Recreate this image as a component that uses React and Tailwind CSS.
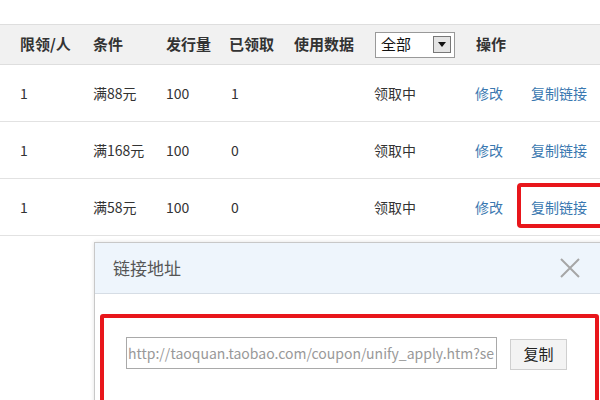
const rows = [
  { limit: "1", cond: "满88元", total: "100", got: "1" },
  { limit: "1", cond: "满168元", total: "100", got: "0" },
  { limit: "1", cond: "满58元", total: "100", got: "0" },
];

export default function App() {
  return (
    <div
      className="relative w-[600px] h-[400px] overflow-hidden bg-white text-[#333]"
      style={{ fontFamily: '"Noto Sans CJK SC", "Liberation Sans", sans-serif' }}
    >
      <div className="h-6" />
      {/* header */}
      <div className="flex items-center h-[41px] bg-[#f1f1f1] border-y border-[#dedede] pl-5 text-[15px] font-bold text-[#333]">
        <div className="w-[73px]">限领/人</div>
        <div className="w-[73px]">条件</div>
        <div className="w-[63px]">发行量</div>
        <div className="w-[65px]">已领取</div>
        <div className="w-[81px]">使用数据</div>
        <div className="w-[101px]">
          <div className="flex items-center justify-between w-[80px] h-[26px] border border-[#999] bg-white pl-[5px] pr-[3px] font-normal text-[15px] text-[#111]">
            <span>全部</span>
            <span className="flex items-center justify-center w-[18px] h-[17px] border border-[#777] bg-[#e4e4e4]">
              <svg width="8" height="5" viewBox="0 0 8 5">
                <path d="M0 0 L8 0 L4 5 Z" fill="#111" />
              </svg>
            </span>
          </div>
        </div>
        <div>操作</div>
      </div>
      {/* rows */}
      {rows.map((r, i) => (
        <div
          key={i}
          className="flex items-center h-[57px] border-b border-[#e2e2e2] pl-5 text-[14px] text-[#333]"
        >
          <div className="w-[73px]">{r.limit}</div>
          <div className="w-[73px]">{r.cond}</div>
          <div className="w-[63px]">{r.total}</div>
          <div className="w-[145px] pl-[2px]">{r.got}</div>
          <div className="w-[101px]">领取中</div>
          <div className="w-[56px] text-[#3a78b0]">修改</div>
          <div className="relative text-[#3a78b0]">
            复制链接
            {i === 2 && (
              <div className="absolute -left-[14px] -top-[14px] w-[90px] h-[45px] border-[4px] border-[#e8161b] rounded-[4px]" />
            )}
          </div>
        </div>
      ))}
      {/* dialog */}
      <div className="absolute left-[94px] top-[242px] w-[520px] h-[170px] border border-[#c8c8c8] bg-white shadow-[0_0_4px_rgba(0,0,0,0.12)]">
        <div className="flex items-center justify-between h-[51px] bg-[#eef5fc] border-b border-[#d6dde5] pl-[18px] pr-[32px]">
          <span className="text-[17px] text-[#555]">链接地址</span>
          <svg width="22" height="22" viewBox="0 0 22 22">
            <path d="M2 2 L20 20 M20 2 L2 20" stroke="#a6a6a6" strokeWidth="2" />
          </svg>
        </div>
        <div className="mt-[20px] ml-[5px] w-[499px] h-[100px] border-[4px] border-[#e8161b] rounded-[3px] pt-[19px] pl-[22px] flex items-start gap-[13px]">
          <div className="w-[371px] h-[32px] border border-[#a9a9a9] flex items-center overflow-hidden whitespace-nowrap pl-[1px] text-[14px] text-[#999]">
            http://taoquan.taobao.com/coupon/unify_apply.htm?se
          </div>
          <div className="mt-[2px] w-[57px] h-[31px] border border-[#cfcfcf] bg-[#f3f3f3] flex items-center justify-center text-[15px] text-[#222]">
            复制
          </div>
        </div>
      </div>
    </div>
  );
}
